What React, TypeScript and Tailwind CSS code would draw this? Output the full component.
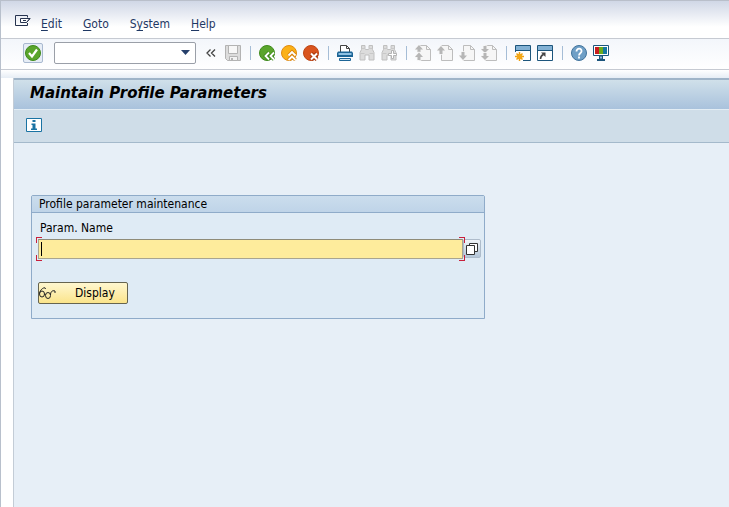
import type { ReactNode } from "react";

type Tool = {
  label: string;
  icon: ReactNode;
  disabled?: boolean;
};

const menus = ["Edit", "Goto", "System", "Help"];

function Icon({ children }: { children: ReactNode }) {
  return (
    <svg viewBox="0 0 16 16" className="h-4 w-4" fill="none">
      {children}
    </svg>
  );
}

function Binoculars({ children }: { children?: ReactNode }) {
  return (
    <Icon>
      <path
        d="M2.5 .5h3.500v3l.5 1h3l.5-1v-3h3.500v4l1.500 3v7.500h-5v-5h-4v5h-5V7.500l1.500-3z"
        fill="#dcdcdc"
        stroke="#c0c0c0"
      />
      <path d="M2.500 3.500H6M10 3.500h3.500M1.500 8.500h4M10.500 8.500h4" stroke="#c8c8c8" />
      {children}
    </Icon>
  );
}

// sheet with a folded corner, the arrows lie over its left side
function Page({ children }: { children: ReactNode }) {
  return (
    <Icon>
      <path d="M4.500 .5h7l4 4v11h-11z" fill="#f6f6f6" stroke="#bdbdbd" />
      <path d="M11.500 .5v4h4" stroke="#bdbdbd" />
      <g fill="#b6b6b6" stroke="#f6f6f6" strokeWidth="1.500" paintOrder="stroke">
        {children}
      </g>
    </Icon>
  );
}

function Win({ children }: { children: ReactNode }) {
  return (
    <Icon>
      <path d="M.5 .5h15v15H.5z" fill="#fff" stroke="#1c557c" />
      <path d="M1 1h14v4H1z" fill="#82b1d4" />
      <path d="M1 5.500h14" stroke="#1c557c" />
      {children}
    </Icon>
  );
}

const groups: Tool[][] = [
  [
    {
      label: "Save",
      disabled: true,
      icon: (
        <Icon>
          <path d="M.5 .5h15v15h-13l-2-2z" fill="#dcdcdc" stroke="#b3b3b3" />
          <path d="M3.500 .5h9v8h-9z" fill="#f7f7f7" stroke="#b3b3b3" />
          <path d="M4.500 11.500h8v4h-8z" fill="#f2f2f2" stroke="#b3b3b3" />
          <path d="M6 13h2v2H6z" fill="#b3b3b3" />
        </Icon>
      ),
    },
  ],
  [
    {
      label: "Back",
      icon: (
        <Icon>
          <circle cx="8" cy="8" r="7.500" fill="#5aa52c" stroke="#3f8a1c" />
          <path d="M10 7.500 6.500 11l3.500 3.500M15 7.500 11.500 11l3.500 3.500" stroke="#3f8a1c" strokeWidth="3.500" />
          <path d="M10 7.500 6.500 11l3.500 3.500M15 7.500 11.500 11l3.500 3.500" stroke="#fff" strokeWidth="1.800" />
        </Icon>
      ),
    },
    {
      label: "Exit",
      icon: (
        <Icon>
          <circle cx="8" cy="8" r="7.500" fill="#fbb117" stroke="#e08a10" />
          <path d="M7.500 10.500 11 7l3.500 3.500M7.500 15l3.500-3.500 3.500 3.500" stroke="#d9820c" strokeWidth="3.500" />
          <path d="M7.500 10.500 11 7l3.500 3.500M7.500 15l3.500-3.500 3.500 3.500" stroke="#fff" strokeWidth="1.800" />
        </Icon>
      ),
    },
    {
      label: "Cancel",
      icon: (
        <Icon>
          <circle cx="8" cy="8" r="7.500" fill="#d9541e" stroke="#bd4514" />
          <path d="m8 8.500 6 6m0-6-6 6" stroke="#a8380c" strokeWidth="4" />
          <path d="m8 8.500 6 6m0-6-6 6" stroke="#fff" strokeWidth="2" />
        </Icon>
      ),
    },
  ],
  [
    {
      label: "Print",
      icon: (
        <Icon>
          <path d="M3.500 7.500v-7h6l3 3v4" fill="#fff" stroke="#444" />
          <path d="M9.500 .5v3h3" stroke="#444" />
          <path d="M0 8l1-1.500h14L16 8v4H0z" fill="#1d6596" />
          <path d="M1.500 9h13" stroke="#8fc1e3" strokeWidth="2" />
          <path d="M2.500 13.500h11v2h-11z" fill="#d7e8f4" stroke="#1d6596" />
        </Icon>
      ),
    },
    { label: "Find", disabled: true, icon: <Binoculars /> },
    {
      label: "Find next",
      disabled: true,
      icon: (
        <Binoculars>
          <path d="M10.500 5.500h2v3h3v2h-3v3h-2v-3h-3v-2h3z" fill="#fff" stroke="#b3b3b3" />
        </Binoculars>
      ),
    },
  ],
  [
    {
      label: "First page",
      disabled: true,
      icon: (
        <Page>
          <path d="m4 0 4 4.500H5.500V7h-3V4.500H0z" />
          <path d="m4 7.500 4 4.500H5.500v3h-3v-3H0z" />
        </Page>
      ),
    },
    {
      label: "Previous page",
      disabled: true,
      icon: (
        <Page>
          <path d="m4 1 4 4.500H5.500V9h-3V5.500H0z" />
        </Page>
      ),
    },
    {
      label: "Next page",
      disabled: true,
      icon: (
        <Page>
          <path d="M2.500 7h3v3.500H8L4 15l-4-4.500h2.500z" />
        </Page>
      ),
    },
    {
      label: "Last page",
      disabled: true,
      icon: (
        <Page>
          <path d="M2.500 1h3v3H8L4 8 0 4h2.500z" />
          <path d="M2.500 8h3v3H8l-4 4-4-4h2.500z" />
        </Page>
      ),
    },
  ],
  [
    {
      label: "New session",
      icon: (
        <Win>
          <path d="M0 7h8v9H0z" fill="#fff" />
          <path d="M4.500 7v9M0 11.500h9M1.500 8.500l6 6m0-6-6 6" stroke="#f0a010" strokeWidth="1.500" />
          <circle cx="4.500" cy="11.500" r="2.800" fill="#f5a816" />
        </Win>
      ),
    },
    {
      label: "Create shortcut",
      icon: (
        <Win>
          <path d="M3.500 14c0-2.500.5-3.500 3-4.500" stroke="#444" strokeWidth="1.600" />
          <path d="M4 7.500h4.500V12z" fill="#444" />
        </Win>
      ),
    },
  ],
  [
    {
      label: "Help",
      icon: (
        <Icon>
          <circle cx="8" cy="8" r="7.500" fill="#6f9fc6" stroke="#41739c" />
          <path d="M5.500 6.500c0-4 5.500-3.500 5 0C10.500 8 8 8 8 10.500M8 11.500v2" stroke="#fff" strokeWidth="1.800" />
        </Icon>
      ),
    },
    {
      label: "Customize layout",
      icon: (
        <Icon>
          <path d="M.5 .5h15v10H.5z" fill="#fff" stroke="#1c557c" />
          <path d="M2 2h4v7H2z" fill="#c81e1e" />
          <path d="M6 2h4v7H6z" fill="#6bab1c" />
          <path d="M10 2h4v7h-4z" fill="#16789f" />
          <path d="M6.500 11h3v3h-3z" fill="#8fb9d8" stroke="#1c557c" />
          <path d="M4 15h8" stroke="#1c557c" strokeWidth="2" />
        </Icon>
      ),
    },
  ],
];

function MenuBar() {
  return (
    <nav className="flex h-[39px] items-end border-t border-b border-t-[#b9bfca] border-b-[#c6cad2] bg-linear-to-b from-[#d0d7e6] to-white to-70% pb-1 pl-3 text-[#1f3864]">
      <button aria-label="Menu" className="mb-[3px] flex h-5 w-5 items-center justify-center">
        <svg viewBox="0 0 16 12" className="h-3 w-4" fill="none" stroke="#26334f">
          <path d="M12.500 2.500v-2H.5v10h12V8" />
          <path d="M11.500 7.500h-6v-4h9.500z" fill="#fff" />
          <path d="M15 3.500 11.500 7.500M8 5.500h3" />
        </svg>
      </button>
      {menus.map((menu) => (
        <button key={menu} className="ml-2 pr-[13px] text-[12px] leading-5">
          {menu === "System" ? (
            <>
              S<span className="underline underline-offset-2">y</span>stem
            </>
          ) : (
            <>
              <span className="underline underline-offset-2">{menu[0]}</span>
              {menu.slice(1)}
            </>
          )}
        </button>
      ))}
    </nav>
  );
}

function Toolbar() {
  return (
    <div className="flex h-[31px] items-center border-b border-[#c6cad2] bg-linear-to-b from-[#f3f6fb] to-white pb-[2px] pl-[22px]">
      <button
        aria-label="Enter"
        className="flex h-5 w-5 items-center justify-center rounded-xs border border-[#a9b9d0] bg-[#e6edf6]"
      >
        <Icon>
          <circle cx="8" cy="8" r="7.500" fill="#5aa52c" stroke="#3f8a1c" />
          <path d="m4 8 3 3.500L12 4.500" stroke="#fff" strokeWidth="2.200" />
        </Icon>
      </button>
      <div className="relative ml-[11px] h-[22px] w-[142px]">
        <select
          aria-label="Command"
          className="h-full w-full appearance-none rounded-xs border border-[#9a9fa8] bg-white outline-none"
        />
        <svg viewBox="0 0 9 5" className="pointer-events-none absolute top-2 right-[6px] h-[5px] w-[9px]">
          <path d="M0 0h9L4.500 5z" fill="#26406b" />
        </svg>
      </div>
      <button aria-label="Collapse" className="ml-[7px] flex h-5 w-4 items-center justify-center">
        <svg viewBox="0 0 10 8" className="h-2 w-[10px]" fill="none" stroke="#444" strokeWidth="1.300">
          <path d="M4.500 .5 1 4l3.500 3.500M9 .5 5.500 4 9 7.500" />
        </svg>
      </button>
      <div className="ml-[3px] flex items-center">
        {groups.map((group, i) => (
          <div key={i} className="flex items-center">
            {i > 0 && (
              <span className="flex w-3 justify-center">
                <span className="h-[14px] w-px bg-[#a5bdd6]" />
              </span>
            )}
            {group.map((tool) => (
              <button
                key={tool.label}
                aria-label={tool.label}
                disabled={tool.disabled}
                className="flex h-[22px] w-[22px] items-center justify-center"
              >
                {tool.icon}
              </button>
            ))}
          </div>
        ))}
      </div>
    </div>
  );
}

function ParamForm() {
  return (
    <section className="w-[454px] max-w-full rounded-t-xs border border-[#8fabc9] bg-[#dfebf5]">
      <h2 className="h-[17px] border-b border-[#8fabc9] bg-linear-to-b from-[#cbdded] to-[#bfd4e8] pl-[7px] text-[12px] leading-4">
        Profile parameter maintenance
      </h2>
      <form className="px-[6px] pt-[5px] pb-[14px]" onSubmit={(e) => e.preventDefault()}>
        <label htmlFor="param" className="block pl-[2px] text-[12px] leading-5">
          Param. Name
        </label>
        <div className="mt-px flex">
          <div className="relative flex-1">
            <input
              id="param"
              type="text"
              className="block h-5 w-full border border-[#a9a58f] border-t-[#8f8b78] bg-[#feec9c] px-1 text-[12px] outline-none"
            />
            <span className="absolute top-[3px] left-[3px] h-[14px] w-px bg-black" />
            <span className="absolute -top-[2px] -left-[2px] h-[6px] w-[6px] border-t border-l border-[#c8203c]" />
            <span className="absolute -bottom-[2px] -left-[2px] h-[6px] w-[6px] border-b border-l border-[#c8203c]" />
            <span className="absolute -top-[2px] -right-[2px] z-10 h-[6px] w-[6px] border-t border-r border-[#c8203c]" />
            <span className="absolute -right-[2px] -bottom-[2px] z-10 h-[6px] w-[6px] border-r border-b border-[#c8203c]" />
          </div>
          <button
            type="button"
            aria-label="Possible entries"
            className="-mr-[3px] flex h-[19px] w-[18px] items-center justify-center rounded-xs border border-[#aebccb] bg-linear-to-b from-[#f0f4f8] to-[#b4c6d8]"
          >
            <svg viewBox="0 0 12 12" className="h-3 w-3" fill="#fff" stroke="#333">
              <path d="M3.500 .5h8v8h-8z" />
              <path d="M.5 2.500h8v9h-8z" />
            </svg>
          </button>
        </div>
        <button
          type="submit"
          className="mt-[23px] flex h-[22px] w-[90px] items-center rounded-xs border border-[#66644f] bg-linear-to-b from-[#fff7cf] to-[#fbe48a] text-[12px]"
        >
          <svg viewBox="0 0 17 12" className="h-3 w-[17px]" fill="none" stroke="#222">
            <ellipse cx="3" cy="7" rx="2.500" ry="3" />
            <ellipse cx="9" cy="8.500" rx="2.500" ry="3" />
            <path d="M.5 6.500C1 3 4 .5 6 .8L6.500 2M5.500 7.500h1M11.500 8c0-3 1.500-5 4.500-4v2" />
          </svg>
          <span className="ml-[19px]">Display</span>
        </button>
      </form>
    </section>
  );
}

export default function App() {
  return (
    <div className="flex min-h-screen flex-col border-l border-[#b8c0cc] bg-white font-['DejaVu_Sans_Condensed','Noto_Sans',sans-serif] text-black">
      <MenuBar />
      <Toolbar />
      <div className="h-2 bg-linear-to-b from-white to-[#e6edf5]" />
      <main className="ml-3 flex-1 border-l border-[#c3ccd6] bg-[#e7eff7]">
        <header>
          <h1 className="h-[31px] border-t-2 border-[#9fb4c8] bg-linear-to-b from-[#d0e0ea] to-[#a9c2dc] pl-4 font-['DejaVu_Sans',sans-serif] text-[15px] leading-[26px] font-bold italic">
            Maintain Profile Parameters
          </h1>
          <div className="flex h-[34px] items-center border-t border-b border-t-[#e3edf4] border-b-[#a4b9cb] bg-[#cfdde8] pb-[3px] pl-3">
            <button aria-label="Information">
              <svg viewBox="0 0 16 14" className="h-[14px] w-4">
                <path d="M.5 .5h15v13H.5z" fill="#fff" stroke="#1a73a3" />
                <path d="M6.500 2h3v2h-3zM5.500 5.500h4v5h1.500V12H5v-1.500h1.500V7h-1z" fill="#1a73a3" />
              </svg>
            </button>
          </div>
        </header>
        <div className="px-[17px] pt-[52px]">
          <ParamForm />
        </div>
      </main>
    </div>
  );
}
